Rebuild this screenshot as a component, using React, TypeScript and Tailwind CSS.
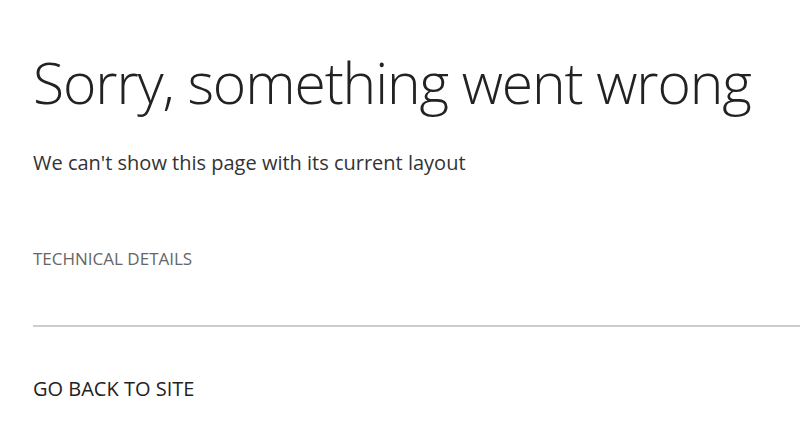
export default function App() {
  return (
    <div className="min-h-screen bg-white font-['Open_Sans',_'Noto_Sans',_sans-serif]">
      <div className="pl-[33px] pt-[48px]">
        <h1 className="whitespace-nowrap text-[57px] font-light leading-[68px] tracking-[-1.1px] text-[#222]">
          Sorry, something went wrong
        </h1>
        <p className="mt-[33px] text-[20px] leading-[28px] text-[#333]">
          We can't show this page with its current layout
        </p>
        <div className="mt-[72px] text-[17px] uppercase leading-[20px] text-[#666]">Technical Details</div>
      </div>
      <div className="ml-[33px] mt-[56px] h-[2px] bg-[#cdcdcd]" />
      <div className="pl-[33px] pt-[50px]">
        <button type="button" className="text-[20px] uppercase leading-[24px] text-[#222]">
          Go back to site
        </button>
      </div>
    </div>
  );
}
